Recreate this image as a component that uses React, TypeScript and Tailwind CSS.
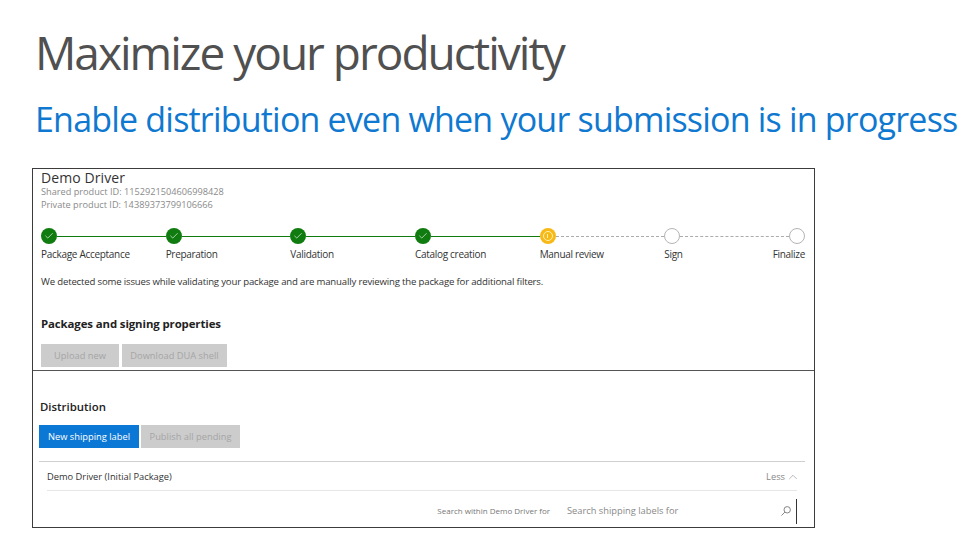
import { Check, ChevronUp } from "lucide-react";

const sans = "font-['Open_Sans','Noto_Sans',sans-serif]";

const steps = [
  { label: "Package Acceptance", state: "done" },
  { label: "Preparation", state: "done" },
  { label: "Validation", state: "done" },
  { label: "Catalog creation", state: "done" },
  { label: "Manual review", state: "active" },
  { label: "Sign", state: "todo" },
];

function Dot({ state }: { state: string }) {
  if (state === "done") {
    return (
      <span className="flex h-4 w-4 shrink-0 items-center justify-center rounded-full bg-[#107c10]">
        <Check className="h-2.5 w-2.5 text-white" strokeWidth={1.5} />
      </span>
    );
  }
  if (state === "active") {
    return (
      <span className="flex h-4 w-4 shrink-0 items-center justify-center rounded-full bg-[#f7b916]">
        <span className="flex h-2.5 w-2.5 items-center justify-center rounded-full border border-[#fff1b8]">
          <span className="h-1 w-px bg-[#fff1b8]" />
        </span>
      </span>
    );
  }
  return <span className="h-4 w-4 shrink-0 rounded-full border-[1.5px] border-[#b4b4b4] bg-white" />;
}

function Stepper() {
  return (
    <div className="mt-[17px]">
      <div className="flex items-center">
        {steps.map((s) => (
          <div key={s.label} className="flex w-[124.67px] items-center">
            <Dot state={s.state} />
            {s.state === "done" ? (
              <span className="h-px flex-1 bg-[#107c10]" />
            ) : (
              <span className="flex-1 border-t border-dashed border-[#ababab]" />
            )}
          </div>
        ))}
        <Dot state="todo" />
      </div>
      <div className="mt-[3px] flex text-[10px] leading-[14px] tracking-[-0.3px] text-[#333]">
        {steps.map((s) => (
          <div key={s.label} className="w-[124.67px] shrink-0 whitespace-nowrap">
            {s.label}
          </div>
        ))}
        <div className="flex min-w-0 flex-1 justify-end whitespace-nowrap">Finalize</div>
      </div>
    </div>
  );
}

export default function App() {
  return (
    <div className={`h-[551px] w-[979px] overflow-hidden bg-white ${sans}`}>
      <div className="pl-[35px] pt-[21px]">
        <h1 className="whitespace-nowrap text-[46px] leading-[62px] tracking-[-2px] text-[#505050]">
          Maximize your productivity
        </h1>
        <h2 className="mt-[13px] whitespace-nowrap text-[34px] leading-[46px] tracking-[-0.8px] text-[#0f78d0]">
          Enable distribution even when your submission is in progress
        </h2>
      </div>

      <div className="ml-[32px] mt-[26px] h-[360px] w-[783px] border border-[#3c3c3c]">
        <section className="h-[202px] border-b border-[#555] pl-[8px] pr-[9px]">
          <div className="pt-[1px] text-[14px] leading-[15px] tracking-[0.1px] text-[#333]">Demo Driver</div>
          <div className="text-[9.2px] leading-[13px] text-[#8a8a8a]">
            <div>Shared product ID: 1152921504606998428</div>
            <div>Private product ID: 14389373799106666</div>
          </div>
          <Stepper />
          <p className="mt-[14px] text-[9.6px] leading-[14px] tracking-[-0.17px] text-[#333]">
            We detected some issues while validating your package and are manually reviewing the package for additional filters.
          </p>
          <h3 className="mt-[27px] text-[11.4px] font-bold leading-[16px] tracking-[-0.1px] text-[#222]">
            Packages and signing properties
          </h3>
          <div className="mt-[12px] flex gap-[3px] text-[9.3px] text-[#a5a5a5]">
            <button className="h-[23px] w-[78px] bg-[#cccccc]">Upload new</button>
            <button className="h-[23px] w-[105px] bg-[#cccccc]">Download DUA shell</button>
          </div>
        </section>

        <section className="pl-[6px] pr-[9px] pt-[28px]">
          <h3 className="ml-px text-[11.4px] font-semibold leading-[16px] text-[#222]">Distribution</h3>
          <div className="mt-[10px] flex gap-[2px] text-[9.3px]">
            <button className="h-[23px] w-[100px] bg-[#0b78d6] text-white">New shipping label</button>
            <button className="h-[23px] w-[99px] bg-[#cccccc] text-[#a5a5a5]">Publish all pending</button>
          </div>
          <div className="mt-[13px] border-t border-[#cfcfcf] px-[8px]">
            <div className="flex h-[29px] items-center justify-between border-b border-[#e6e6e6] text-[9.3px] text-[#333]">
              <span className="pt-[2px]">Demo Driver (Initial Package)</span>
              <span className="-mr-[3px] flex items-center gap-[1px] pt-[2px] text-[#888]">
                Less <ChevronUp className="h-3.5 w-3.5" strokeWidth={1} />
              </span>
            </div>
            <div className="flex h-[36px] items-center justify-end pt-[4px]">
              <span className="text-[8px] text-[#777]">Search within Demo Driver for</span>
              <div className="ml-[17px] flex h-[25px] w-[230px] items-center justify-between border-r border-[#333] text-[9.3px] text-[#888]">
                <span>Search shipping labels for</span>
                <svg viewBox="0 0 10 10" className="mr-[5px] h-2.5 w-2.5 text-[#777]" fill="none" stroke="currentColor" strokeWidth="0.9">
                  <circle cx="6.2" cy="3.8" r="3.2" />
                  <path d="M3.9 6.1 L0.5 9.5" />
                </svg>
              </div>
            </div>
          </div>
        </section>
      </div>
    </div>
  );
}
